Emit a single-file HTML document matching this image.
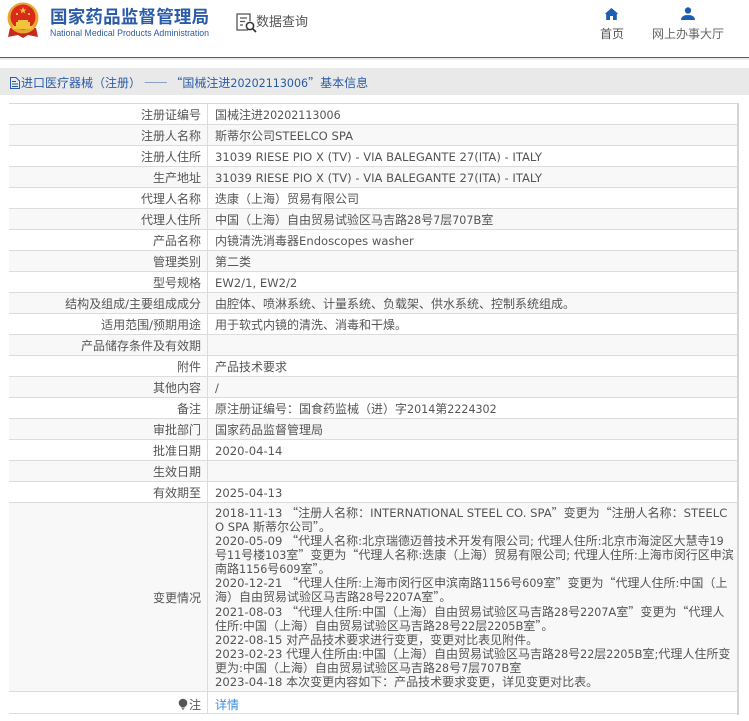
<!DOCTYPE html>
<html lang="zh"><head><meta charset="utf-8"><title>进口医疗器械</title>
<style>
html,body{margin:0;padding:0;background:#fff}
body{width:749px;height:721px;position:relative;overflow:hidden;font-family:"WenQuanYi Zen Hei","Noto Sans CJK SC",sans-serif;font-size:12px;color:#555}
b{font:normal 11.6px "DejaVu Sans",sans-serif}
em{font:normal 11.1px "DejaVu Sans",sans-serif}
.a{position:absolute;white-space:nowrap}
.row{position:absolute;left:9px;width:728px;height:20px;border-bottom:1px solid #dcdcdc}
.row.o{background:#f8f8f8}
.l{position:absolute;left:0;width:192px;text-align:right;top:0;line-height:21px;white-space:nowrap}
.v{position:absolute;left:206px;top:0;line-height:21px;white-space:nowrap}
.s{position:absolute;left:207px;top:104px;width:1px;height:610px;background:#dcdcdc}
.c{position:absolute;left:215px;top:506px;line-height:14.08px;white-space:nowrap}
</style></head><body>
<svg class="a" style="left:6px;top:2px" width="34" height="37" viewBox="0 0 34 37">
<path d="M4 26 L2 35 L12 33 L17 36 L22 33 L32 35 L30 26Z" fill="#c8281e"/>
<circle cx="17" cy="16" r="15.5" fill="#e6a82e"/>
<circle cx="17" cy="15" r="12.5" fill="#d92a1c"/>
<path d="M7 24 H27 V27 H7Z M10 20 H24 V24 H10Z M12 18 H22 V20 H12Z" fill="#f2c33c"/>
<path d="M17 5l1 2.5h2.5l-2 1.5.8 2.5-2.3-1.5-2.3 1.5.8-2.500-2-1.500H16z" fill="#f2c33c"/>
<path d="M10 11h2v2h-2zM22 11h2v2h-2z" fill="#f2c33c"/>
</svg>
<div class="a" style="left:50px;top:5px;font:bold 17.5px/24px 'Noto Sans CJK SC',sans-serif;color:#2a5ba8;letter-spacing:.2px">国家药品监督管理局</div>
<div class="a" style="left:50px;top:27px;font:8.75px/13px 'Liberation Sans',sans-serif;color:#2a5ba8">National Medical Products Administration</div>
<svg class="a" style="left:236px;top:13px" width="22" height="20" viewBox="0 0 22 20" fill="none" stroke="#555" stroke-width="1.3">
<path d="M12 17H1V1H14V8M4 5H11M4 8.500H9M4 12H7"/><circle cx="14" cy="13" r="3.600" stroke="#333" stroke-width="1.500"/><path d="M16.800 15.800L20 19" stroke="#333" stroke-width="1.700"/></svg>
<div class="a" style="left:256px;top:11px;font:13px/20px 'Noto Sans CJK SC',sans-serif;color:#555">数据查询</div>
<svg class="a" style="left:605px;top:8px" width="13" height="12" viewBox="0 0 13 12"><path d="M6.500 0L13 5.600 11.800 6.400V12H8V8H5V12H1.200V6.400L0 5.600Z" fill="#1a5fb4"/></svg>
<svg class="a" style="left:681px;top:7px" width="14" height="14" viewBox="0 0 14 14"><circle cx="7" cy="3.500" r="3.200" fill="#1a5fb4"/><path d="M0 13C0 9.500 3 8 7 8S14 9.500 14 13Z" fill="#1a5fb4"/></svg>
<div class="a" style="left:600px;top:25px;font:12px/17px 'Noto Sans CJK SC',sans-serif;color:#555">首页</div>
<div class="a" style="left:652px;top:25px;font:12px/17px 'Noto Sans CJK SC',sans-serif;color:#666">网上办事大厅</div>
<div class="a" style="left:0;top:57px;width:749px;height:1px;background:#1f6a9c"></div>
<div class="a" style="left:0;top:58px;width:749px;height:2px;background:#ececec"></div>
<div class="a" style="left:0;top:68px;width:749px;height:27px;background:#e9e9e9"></div>
<svg class="a" style="left:10px;top:77px" width="10" height="12" viewBox="0 0 10 12" fill="none" stroke="#2a5ba8"><path d="M.5.500H6L9.500 4V11.500H.5ZM2 4.500H6M2 7H8M2 9.500H8"/></svg>
<div class="a" style="left:21px;top:74px;line-height:18px;color:#2a5ba8">进口医疗器械（注册） <span style="font-family:'Noto Sans CJK SC',sans-serif">——</span> “国械注进<em>20202113006</em>”基本信息</div>

<div class="a" style="left:9px;top:103px;width:728px;height:1px;background:#d8d8d8"></div>
<div class="a" style="left:737px;top:103px;width:2px;height:612px;background:#d4d4d4"></div>
<div class="row" style="top:104px"><div class="l">注册证编号</div><div class="v">国械注进<em>20202113006</em></div></div>
<div class="row o" style="top:125px"><div class="l">注册人名称</div><div class="v">斯蒂尔公司<b>STEELCO SPA</b></div></div>
<div class="row" style="top:146px"><div class="l">注册人住所</div><div class="v"><b>31039 RIESE PIO X (TV) - VIA BALEGANTE 27(ITA) - ITALY</b></div></div>
<div class="row o" style="top:167px"><div class="l">生产地址</div><div class="v"><b>31039 RIESE PIO X (TV) - VIA BALEGANTE 27(ITA) - ITALY</b></div></div>
<div class="row" style="top:188px"><div class="l">代理人名称</div><div class="v">迭康（上海）贸易有限公司</div></div>
<div class="row o" style="top:209px"><div class="l">代理人住所</div><div class="v">中国（上海）自由贸易试验区马吉路<em>28</em>号<em>7</em>层<em>707</em><b>B</b>室</div></div>
<div class="row" style="top:230px"><div class="l">产品名称</div><div class="v">内镜清洗消毒器<b>Endoscopes washer</b></div></div>
<div class="row o" style="top:251px"><div class="l">管理类别</div><div class="v">第二类</div></div>
<div class="row" style="top:272px"><div class="l">型号规格</div><div class="v"><b>EW2/1, EW2/2</b></div></div>
<div class="row o" style="top:293px"><div class="l">结构及组成<b>/</b>主要组成成分</div><div class="v">由腔体、喷淋系统、计量系统、负载架、供水系统、控制系统组成。</div></div>
<div class="row" style="top:314px"><div class="l">适用范围<b>/</b>预期用途</div><div class="v">用于软式内镜的清洗、消毒和干燥。</div></div>
<div class="row o" style="top:335px"><div class="l">产品储存条件及有效期</div></div>
<div class="row" style="top:356px"><div class="l">附件</div><div class="v">产品技术要求</div></div>
<div class="row o" style="top:377px"><div class="l">其他内容</div><div class="v"><b>/</b></div></div>
<div class="row" style="top:398px"><div class="l">备注</div><div class="v">原注册证编号：国食药监械（进）字<em>2014</em>第<em>2224302</em></div></div>
<div class="row o" style="top:419px"><div class="l">审批部门</div><div class="v">国家药品监督管理局</div></div>
<div class="row" style="top:440px"><div class="l">批准日期</div><div class="v"><b>2020-04-14</b></div></div>
<div class="row o" style="top:461px"><div class="l">生效日期</div></div>
<div class="row" style="top:482px"><div class="l">有效期至</div><div class="v"><b>2025-04-13</b></div></div>
<div class="row o" style="top:503px;height:188px"><div class="l" style="line-height:190px">变更情况</div></div>
<div class="row" style="top:692px;height:21px"><div class="l" style="line-height:25px">注</div><div class="v" style="line-height:25px;color:#3d8fe0">详情</div></div>
<svg class="a" style="left:178px;top:698px" width="10" height="13" viewBox="0 0 10 13"><circle cx="5" cy="5" r="4.300" fill="#555"/><path d="M3 9.500h4L5 12.500Z" fill="#888"/></svg>
<div class="s"></div>
<div class="c"><b>2018-11-13 </b>“注册人名称：<b>INTERNATIONAL STEEL CO. SPA</b>”变更为“注册人名称：<b>STEELC</b><br><b>O SPA </b>斯蒂尔公司”。<br><b>2020-05-09 </b> “代理人名称<b>:</b>北京瑞德迈普技术开发有限公司<b>; </b>代理人住所<b>:</b>北京市海淀区大慧寺<em>19</em><br>号<em>11</em>号楼<em>103</em>室”变更为“代理人名称<b>:</b>迭康（上海）贸易有限公司<b>; </b>代理人住所<b>:</b>上海市闵行区申滨<br>南路<em>1156</em>号<em>609</em>室”。<br><b>2020-12-21 </b> “代理人住所<b>:</b>上海市闵行区申滨南路<em>1156</em>号<em>609</em>室”变更为“代理人住所<b>:</b>中国（上<br>海）自由贸易试验区马吉路<em>28</em>号<em>2207</em><b>A</b>室”。<br><b>2021-08-03 </b> “代理人住所<b>:</b>中国（上海）自由贸易试验区马吉路<em>28</em>号<em>2207</em><b>A</b>室”变更为“代理人<br>住所<b>:</b>中国（上海）自由贸易试验区马吉路<em>28</em>号<em>22</em>层<em>2205</em><b>B</b>室”。<br><b>2022-08-15 </b>对产品技术要求进行变更，变更对比表见附件。<br><b>2023-02-23 </b>代理人住所由<b>:</b>中国（上海）自由贸易试验区马吉路<em>28</em>号<em>22</em>层<em>2205</em><b>B</b>室<b>;</b>代理人住所变<br>更为<b>:</b>中国（上海）自由贸易试验区马吉路<em>28</em>号<em>7</em>层<em>707</em><b>B</b>室<br><b>2023-04-18 </b>本次变更内容如下：产品技术要求变更，详见变更对比表。</div>
</body></html>
